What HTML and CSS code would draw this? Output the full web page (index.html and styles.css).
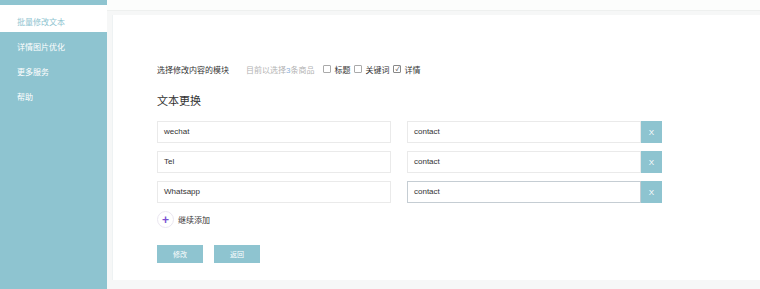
FILE: index.html
```html
<!DOCTYPE html>
<html lang="zh-CN">
<head>
  <meta charset="UTF-8" />
  <title>批量修改文本</title>
  <link rel="stylesheet" href="styles.css">
</head>
<body>
  <div class="layout">
    <div class="sidebar">
      <a class="nav-item active">批量修改文本</a>
      <a class="nav-item">详情图片优化</a>
      <a class="nav-item">更多服务</a>
      <a class="nav-item">帮助</a>
    </div>

    <div class="main">
      <div class="topbar"></div>
      <div class="card">
        <div class="module-row">
          <span class="label">选择修改内容的模块</span>
          <span class="hint">目前以选择<em>3</em>条商品</span>
          <label class="check"><span class="box"></span>标题</label>
          <label class="check"><span class="box"></span>关键词</label>
          <label class="check"><span class="box checked">✓</span>详情</label>
        </div>

        <h2>文本更换</h2>

        <div class="pair">
          <div class="input">wechat</div>
          <div class="input right">contact</div>
          <button class="del">X</button>
        </div>
        <div class="pair">
          <div class="input">Tel</div>
          <div class="input right">contact</div>
          <button class="del">X</button>
        </div>
        <div class="pair">
          <div class="input">Whatsapp</div>
          <div class="input right focus">contact</div>
          <button class="del">X</button>
        </div>

        <div class="add-row">
          <span class="plus">+</span>继续添加
        </div>

        <div class="actions">
          <button class="btn">修改</button>
          <button class="btn">返回</button>
        </div>
      </div>
    </div>
  </div>
</body>
</html>
```

FILE: styles.css
```css
body {
  margin: 0;
  background: #f6f7f7;
  font-family: "Liberation Sans", Arial, "Noto Sans CJK SC", sans-serif;
  color: #333;
}
.layout {
  display: flex;
  height: 289px;
  overflow: hidden;
}
.sidebar {
  width: 107px;
  flex-shrink: 0;
  background: #8ec4d0;
  padding-top: 5px;
}
.nav-item {
  display: block;
  height: 14px;
  padding-top: 11px;
  line-height: 14px;
  padding-left: 17px;
  font-size: 8px;
  color: #fff;
}
.nav-item.active {
  background: #fff;
  color: #8ec4d0;
  box-shadow: 0 2px 0 #fff;
}
.main {
  flex: 1;
  display: flex;
  flex-direction: column;
}
.topbar {
  height: 10px;
  background: #fcfdfc;
  border-bottom: 1px solid #eef0ef;
}
.card {
  margin: 4px 0 0 5px;
  height: 265px;
  box-sizing: border-box;
  background: #fff;
  border-left: 1px solid #eef2f3;
  padding: 48px 0 0 44px;
}
.module-row {
  display: flex;
  align-items: center;
  font-size: 8px;
  height: 12px;
}
.label {
  width: 89px;
}
.hint {
  color: #b3b3b3;
  margin-right: 9px;
}
.hint em {
  font-style: normal;
  color: #8ab0d8;
}
.check {
  display: flex;
  align-items: center;
  margin-right: 4px;
}
.box {
  width: 6px;
  height: 6px;
  border: 1px solid #aaa;
  border-radius: 1px;
  margin-right: 3px;
  font-size: 6px;
  line-height: 6px;
  text-align: center;
  color: #333;
}
.box.checked {
  border-color: #888;
}
h2 {
  font-weight: normal;
  font-size: 11px;
  margin: 18px 0 12px;
  height: 16px;
  line-height: 16px;
}
.pair {
  display: flex;
  align-items: center;
  height: 22px;
  margin-bottom: 8px;
}
.input {
  width: 234px;
  height: 22px;
  box-sizing: border-box;
  border: 1px solid #eaeaea;
  padding-left: 6px;
  font-size: 8px;
  line-height: 20px;
  color: #333;
}
.input.right {
  margin-left: 16px;
}
.input.focus {
  border-color: #c5cdd3;
}
.del {
  width: 21px;
  height: 22px;
  border: none;
  background: #8ec4d0;
  color: #fff;
  font-family: "Liberation Sans", Arial, sans-serif;
  font-size: 8px;
  padding: 0;
}
.add-row {
  display: flex;
  align-items: center;
  margin-top: 5px;
  font-size: 8px;
}
.plus {
  width: 15px;
  height: 15px;
  border: 1px solid #ebe7f1;
  border-radius: 50%;
  display: flex;
  align-items: center;
  justify-content: center;
  color: #7b4fd2;
  font-size: 12px;
  font-weight: bold;
  margin-right: 4px;
}
.actions {
  display: flex;
  gap: 11px;
  margin-top: 17px;
}
.btn {
  width: 46px;
  height: 18px;
  border: none;
  background: #8ec4d0;
  color: #fff;
  font-family: "Noto Sans CJK SC", sans-serif;
  font-size: 7px;
  padding: 0;
}
```
